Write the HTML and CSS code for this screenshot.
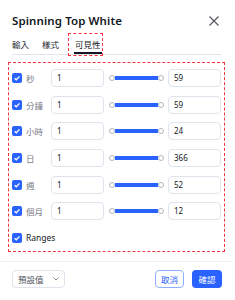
FILE: index.html
```html
<!DOCTYPE html>
<html>
<head>
<meta charset="utf-8">
<link rel="stylesheet" href="styles.css">
</head>
<body>
<div class="dialog">
  <div class="header">
    <div class="title">Spinning Top White</div>
    <svg class="close" width="10" height="10" viewBox="0 0 10 10"><path d="M0.5 0.5L9.5 9.5M9.5 0.5L0.5 9.5" stroke="#50535e" stroke-width="1.1" fill="none"/></svg>
  </div>
  <div class="tabs">
    <div class="tab">輸入</div>
    <div class="tab">樣式</div>
    <div class="tab active">可見性<span class="hl"></span></div>
  </div>
  <div class="panel">
    <div class="row">
      <span class="cb"><svg width="10" height="10" viewBox="0 0 10 10"><path d="M2.6 5.2L4.3 6.8L7.5 3.4" stroke="#fff" stroke-width="1.3" fill="none"/></svg></span>
      <span class="lbl">秒</span>
      <span class="inp">1</span>
      <span class="slider"><i class="knob"></i><i class="bar"></i><i class="knob"></i></span>
      <span class="inp">59</span>
    </div>
    <div class="row">
      <span class="cb"><svg width="10" height="10" viewBox="0 0 10 10"><path d="M2.6 5.2L4.3 6.8L7.5 3.4" stroke="#fff" stroke-width="1.3" fill="none"/></svg></span>
      <span class="lbl">分鐘</span>
      <span class="inp">1</span>
      <span class="slider"><i class="knob"></i><i class="bar"></i><i class="knob"></i></span>
      <span class="inp">59</span>
    </div>
    <div class="row">
      <span class="cb"><svg width="10" height="10" viewBox="0 0 10 10"><path d="M2.6 5.2L4.3 6.8L7.5 3.4" stroke="#fff" stroke-width="1.3" fill="none"/></svg></span>
      <span class="lbl">小時</span>
      <span class="inp">1</span>
      <span class="slider"><i class="knob"></i><i class="bar"></i><i class="knob"></i></span>
      <span class="inp">24</span>
    </div>
    <div class="row">
      <span class="cb"><svg width="10" height="10" viewBox="0 0 10 10"><path d="M2.6 5.2L4.3 6.8L7.5 3.4" stroke="#fff" stroke-width="1.3" fill="none"/></svg></span>
      <span class="lbl">日</span>
      <span class="inp">1</span>
      <span class="slider"><i class="knob"></i><i class="bar"></i><i class="knob"></i></span>
      <span class="inp">366</span>
    </div>
    <div class="row">
      <span class="cb"><svg width="10" height="10" viewBox="0 0 10 10"><path d="M2.6 5.2L4.3 6.8L7.5 3.4" stroke="#fff" stroke-width="1.3" fill="none"/></svg></span>
      <span class="lbl">週</span>
      <span class="inp">1</span>
      <span class="slider"><i class="knob"></i><i class="bar"></i><i class="knob"></i></span>
      <span class="inp">52</span>
    </div>
    <div class="row">
      <span class="cb"><svg width="10" height="10" viewBox="0 0 10 10"><path d="M2.6 5.2L4.3 6.8L7.5 3.4" stroke="#fff" stroke-width="1.3" fill="none"/></svg></span>
      <span class="lbl">個月</span>
      <span class="inp">1</span>
      <span class="slider"><i class="knob"></i><i class="bar"></i><i class="knob"></i></span>
      <span class="inp">12</span>
    </div>
    <div class="row">
      <span class="cb"><svg width="10" height="10" viewBox="0 0 10 10"><path d="M2.6 5.2L4.3 6.8L7.5 3.4" stroke="#fff" stroke-width="1.3" fill="none"/></svg></span>
      <span class="lbl dark">Ranges</span>
    </div>
  </div>
  <div class="footer">
    <div class="select">預設值<svg width="6" height="4" viewBox="0 0 6 4"><path d="M0.5 0.5L3 3L5.5 0.5" stroke="#787b86" stroke-width="0.9" fill="none"/></svg></div>
    <div class="spacer"></div>
    <div class="btn cancel">取消</div>
    <div class="btn ok">確認</div>
  </div>
</div>
</body>
</html>
```
FILE: styles.css
```css
html, body {
  margin: 0;
  padding: 0;
  background: #fff;
}
body {
  font-family: "Noto Sans", "Noto Sans CJK TC", sans-serif;
  color: #131722;
}
.dialog {
  width: 235px;
  height: 300px;
  box-sizing: border-box;
  position: relative;
}
.header {
  display: flex;
  align-items: center;
  justify-content: space-between;
  padding: 13px 16px 0 12px;
  height: 16px;
}
.title {
  font-size: 11.5px;
  font-weight: 600;
  line-height: 16px;
  letter-spacing: 0.1px;
}
.close {
  display: block;
}
.tabs {
  display: flex;
  margin: 8px 14px 0 12px;
  border-bottom: 1px solid #e0e3eb;
  height: 17px;
}
.tab {
  font-family: "Noto Sans CJK TC", sans-serif;
  font-size: 8.5px;
  line-height: 14px;
  color: #2a2e39;
  margin-right: 13px;
  position: relative;
}
.tab.active {
  margin-left: 2px;
  color: #131722;
  border-bottom: 2px solid #131722;
  height: 15px;
  padding: 0 1px;
}
.hl {
  position: absolute;
  left: -6px;
  top: -4px;
  width: 33px;
  height: 21px;
  border: 1px dashed #f0353f;
}
.panel {
  margin: 7px 10px 0 8px;
  border: 1px dashed #f0353f;
  padding: 6px 3px 4px 3px;
  display: flex;
  flex-direction: column;
  gap: 8.67px;
}
.row {
  display: flex;
  align-items: center;
  height: 18px;
}
.cb {
  width: 10px;
  height: 10px;
  border-radius: 2px;
  background: #2962ff;
  margin-right: 4px;
  display: block;
}
.cb svg { display: block; }
.lbl {
  width: 25px;
  font-family: "Noto Sans CJK TC", sans-serif;
  font-size: 8.5px;
  color: #787b86;
  line-height: 12px;
}
.lbl.dark {
  font-family: "Noto Sans", sans-serif;
  color: #131722;
  width: auto;
}
.inp {
  width: 53px;
  height: 18px;
  box-sizing: border-box;
  border: 1px solid #e0e3eb;
  border-radius: 4px;
  font-size: 8px;
  line-height: 16px;
  padding-left: 5px;
  color: #131722;
}
.slider {
  display: flex;
  align-items: center;
  width: 55px;
  margin: 0 4px 0 5px;
}
.knob {
  width: 6px;
  height: 6px;
  box-sizing: border-box;
  border: 1px solid #b2b5be;
  border-radius: 50%;
  background: #fff;
  flex: none;
}
.bar {
  flex: 1;
  height: 4px;
  background: #2962ff;
}
.footer {
  margin-top: 9px;
  border-top: 1px solid #eef0f3;
  width: 231px;
  padding: 8px 0 0 12px;
  box-sizing: border-box;
  display: flex;
  align-items: center;
  font-family: "Noto Sans CJK TC", sans-serif;
  font-size: 8.5px;
}
.select {
  width: 53px;
  height: 18px;
  box-sizing: border-box;
  border: 1px solid #e0e3eb;
  border-radius: 4px;
  display: flex;
  align-items: center;
  justify-content: space-between;
  padding: 0 5px 0 5px;
  color: #50535e;
}
.spacer { flex: 1; }
.btn {
  height: 18px;
  box-sizing: border-box;
  border-radius: 4px;
  display: flex;
  align-items: center;
  justify-content: center;
}
.cancel {
  width: 29px;
  border: 1px solid #8caeff;
  color: #2962ff;
  margin-right: 8px;
}
.ok {
  width: 30px;
  background: #2962ff;
  color: #fff;
  margin-right: 9px;
}
```
